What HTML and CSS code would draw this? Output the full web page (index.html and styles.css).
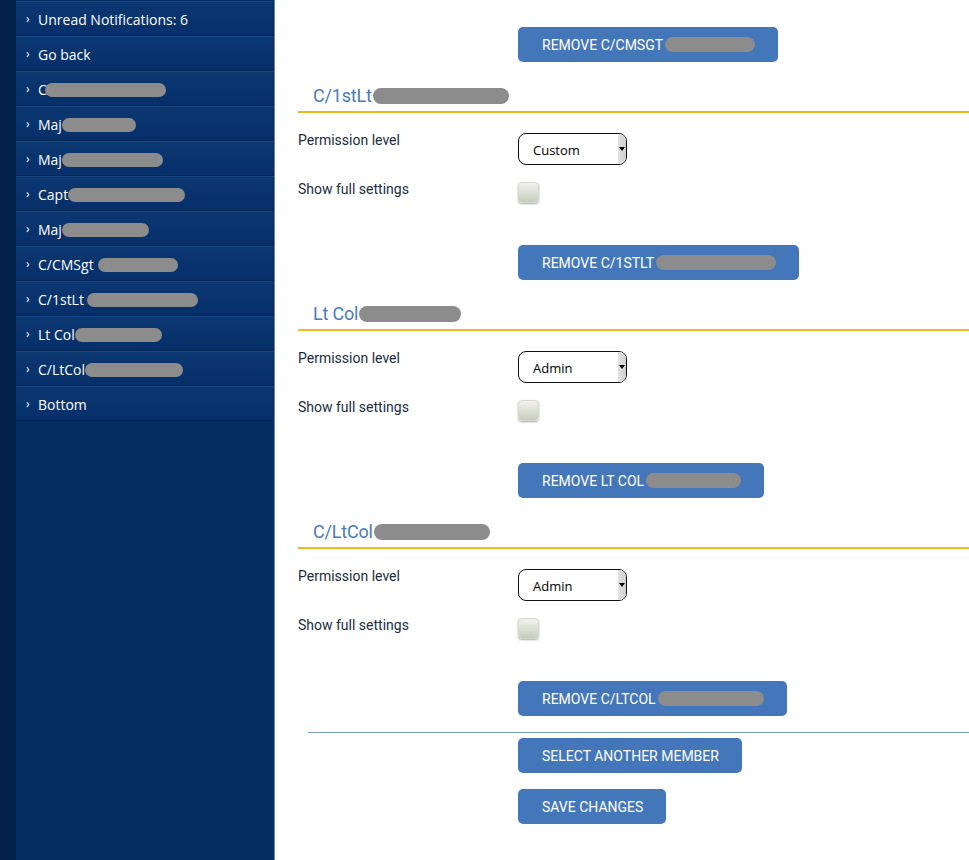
FILE: index.html
```html
<!DOCTYPE html>
<html>
<head>
<meta charset="utf-8">
<link rel="stylesheet" href="styles.css">
</head>
<body>
<div class="page">
  <aside class="sidebar">
    <div class="stripe"></div>
    <nav class="panel">
      <ul class="menu">
        <li class="item"><span class="chev">›</span><span class="label">Unread Notifications: 6</span></li>
        <li class="item"><span class="chev">›</span><span class="label">Go back</span></li>
        <li class="item"><span class="chev">›</span><span class="label">C</span><span class="redact sm" style="width:121px;margin-left:-2px"></span></li>
        <li class="item"><span class="chev">›</span><span class="label">Maj</span><span class="redact sm" style="width:74px"></span></li>
        <li class="item"><span class="chev">›</span><span class="label">Maj</span><span class="redact sm" style="width:101px"></span></li>
        <li class="item"><span class="chev">›</span><span class="label">Capt</span><span class="redact sm" style="width:117px"></span></li>
        <li class="item"><span class="chev">›</span><span class="label">Maj</span><span class="redact sm" style="width:87px"></span></li>
        <li class="item"><span class="chev">›</span><span class="label">C/CMSgt</span><span class="redact sm" style="width:80px;margin-left:4px"></span></li>
        <li class="item"><span class="chev">›</span><span class="label">C/1stLt</span><span class="redact sm" style="width:111px;margin-left:3px"></span></li>
        <li class="item"><span class="chev">›</span><span class="label">Lt Col</span><span class="redact sm" style="width:87px"></span></li>
        <li class="item"><span class="chev">›</span><span class="label">C/LtCol</span><span class="redact sm" style="width:98px"></span></li>
        <li class="item"><span class="chev">›</span><span class="label">Bottom</span></li>
      </ul>
    </nav>
  </aside>

  <main class="main">
    <button class="btn first">REMOVE C/CMSGT<span class="redact" style="width:90px"></span></button>

    <section class="member">
      <h2 class="heading">C/1stLt<span class="redact lg" style="width:136px"></span></h2>
      <div class="row perm">
        <span class="row-label">Permission level</span>
        <div class="select"><span class="select-text">Custom</span><span class="select-arrow"></span></div>
      </div>
      <div class="row show">
        <span class="row-label">Show full settings</span>
        <span class="checkbox"></span>
      </div>
      <button class="btn remove">REMOVE C/1STLT<span class="redact" style="width:120px"></span></button>
    </section>

    <section class="member">
      <h2 class="heading">Lt Col<span class="redact lg" style="width:102px"></span></h2>
      <div class="row perm">
        <span class="row-label">Permission level</span>
        <div class="select"><span class="select-text">Admin</span><span class="select-arrow"></span></div>
      </div>
      <div class="row show">
        <span class="row-label">Show full settings</span>
        <span class="checkbox"></span>
      </div>
      <button class="btn remove">REMOVE LT COL<span class="redact" style="width:95px"></span></button>
    </section>

    <section class="member">
      <h2 class="heading">C/LtCol<span class="redact lg" style="width:116px"></span></h2>
      <div class="row perm">
        <span class="row-label">Permission level</span>
        <div class="select"><span class="select-text">Admin</span><span class="select-arrow"></span></div>
      </div>
      <div class="row show">
        <span class="row-label">Show full settings</span>
        <span class="checkbox"></span>
      </div>
      <button class="btn remove">REMOVE C/LTCOL<span class="redact" style="width:106px"></span></button>
    </section>

    <hr class="divider">
    <button class="btn action">SELECT ANOTHER MEMBER</button>
    <button class="btn action save">SAVE CHANGES</button>
  </main>
</div>
</body>
</html>
```

FILE: styles.css
```css
* { box-sizing: border-box; }
html, body { margin: 0; padding: 0; }
body {
  width: 969px;
  height: 860px;
  overflow: hidden;
  background: #ffffff;
  font-family: Roboto, "Liberation Sans", sans-serif;
}
.page {
  display: flex;
  height: 860px;
}

/* Sidebar */
.sidebar {
  display: flex;
  width: 275px;
  flex: none;
  height: 100%;
}
.stripe {
  width: 16px;
  background: #03214a;
}
.panel {
  width: 259px;
  background: #042d61;
  border-right: 1px solid #6f86a3;
}
.menu {
  list-style: none;
  margin: 0;
  padding: 1px 0 0 0;
  width: 257px;
}
.item {
  display: flex;
  align-items: center;
  height: 35px;
  padding: 2px 0 0 10px;
  background: linear-gradient(#0b3771, #07306a);
  border-top: 1px solid #1a4883;
  border-bottom: 1px solid #042659;
  color: #ffffff;
  font-family: "Open Sans", "Noto Sans", sans-serif;
  font-size: 14px;
  white-space: nowrap;
}
.chev {
  width: 12px;
  font-size: 12px;
  line-height: 1;
  margin-top: -2px;
}
.label { line-height: 18px; }

.redact {
  display: inline-block;
  height: 15px;
  border-radius: 8px;
  background: #8c8c8c;
  vertical-align: middle;
}
.redact.sm { height: 14px; border-radius: 7px; }
.redact.lg { height: 16px; margin-left: 1px; }

/* Main */
.main {
  flex: 1;
  padding: 27px 0 0 23px;
  display: flex;
  flex-direction: column;
  align-items: flex-start;
}
.btn {
  display: inline-flex;
  align-items: center;
  height: 35px;
  padding: 0 23px 0 24px;
  margin-left: 220px;
  border: none;
  border-radius: 5px;
  background: #4477b9;
  color: #ffffff;
  font-family: Roboto, "Liberation Sans", sans-serif;
  font-size: 14px;
  letter-spacing: 0;
  white-space: nowrap;
  cursor: pointer;
}
.btn .redact { margin-left: 2px; }

.member {
  align-self: stretch;
  display: flex;
  flex-direction: column;
  align-items: flex-start;
}
.heading {
  align-self: stretch;
  margin: 23px 0 0 0;
  padding: 0 0 0 15px;
  height: 28px;
  border-bottom: 2px solid #f2b81e;
  font-family: Roboto, "Liberation Sans", sans-serif;
  font-weight: 400;
  font-size: 18px;
  line-height: 22px;
  color: #4a7bb5;
  display: flex;
  align-items: flex-start;
  letter-spacing: -0.2px;
}
.heading .redact { margin-top: 3px; }
.row {
  display: flex;
  align-items: flex-start;
}
.row.perm { margin-top: 20px; height: 32px; }
.row.show { margin-top: 17px; height: 22px; }
.row-label {
  width: 220px;
  font-size: 14px;
  line-height: 16px;
  margin-top: -1px;
  color: #1c2c40;
}
.select {
  display: flex;
  align-items: center;
  justify-content: space-between;
  width: 109px;
  height: 32px;
  border: 1px solid #111;
  border-radius: 8px;
  overflow: hidden;
  background: #fff;
}
.select-text {
  padding: 1px 0 0 14px;
  font-family: "Open Sans", "Noto Sans", sans-serif;
  font-size: 13px;
  color: #000;
}
.select-arrow {
  position: relative;
  width: 8px;
  height: 100%;
  background: linear-gradient(90deg, #e2e2e2, #cfcfcf);
}
.select-arrow::after {
  content: "";
  position: absolute;
  left: 1px;
  top: 13px;
  border-left: 3px solid transparent;
  border-right: 3px solid transparent;
  border-top: 4px solid #000;
}
.checkbox {
  width: 21px;
  height: 21px;
  border-radius: 4px;
  border: 1px solid #d6d9d0;
  background: linear-gradient(#f2f2ee, #c6cdbd);
  box-shadow: 0 1px 2px rgba(0,0,0,0.35);
}
.btn.remove { margin-top: 41px; }

.divider {
  align-self: stretch;
  margin: 16px 0 0 10px;
  border: none;
  border-top: 1px solid #7d9bc0;
  height: 0;
}
.btn.action { margin-top: 5px; height: 35px; }
.btn.save { margin-top: 16px; }
```
